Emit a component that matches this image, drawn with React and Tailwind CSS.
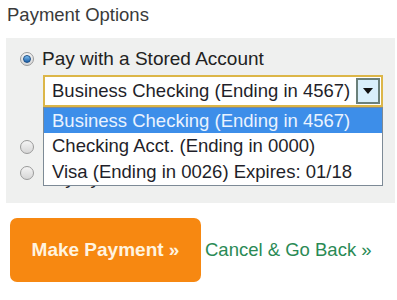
import React from 'react';

function Radio({ checked }) {
    return (
        <span className="flex items-center justify-center w-[14px] h-[14px] rounded-full border border-[#9a9a9a] bg-gradient-to-b from-[#f4f4f4] to-[#d6d6d6] shrink-0">
            {checked && (
                <span className="w-[8px] h-[8px] rounded-full bg-gradient-to-b from-[#7fc1f2] to-[#1a5fa8] border border-[#1d4f86]" />
            )}
        </span>
    );
}

export default function App() {
    const cuentas = [
        'Business Checking (Ending in 4567)',
        'Checking Acct. (Ending in 0000)',
        'Visa (Ending in 0026) Expires: 01/18',
    ];

    return (
        <div className="w-[397px] h-[300px] bg-white overflow-hidden text-[#2b2b2b]" style={{ fontFamily: '"Liberation Sans", Arial, sans-serif' }}>
            <h1 className="pl-[7px] pt-[5px] h-[38px] text-[18.5px] leading-[20px] font-normal text-[#3a3a3a]">Payment Options</h1>

            <div className="relative ml-[6px] w-[389px] h-[165px] bg-[#eff0ef] pt-[11px]">
                <label className="flex items-center gap-[8px] pl-[14px] h-[20px]">
                    <Radio checked />
                    <span className="text-[19px] leading-[20px] text-[#222]">Pay with a Stored Account</span>
                </label>

                {/* select cerrado */}
                <div className="mt-[6px] ml-[37px] w-[340px] h-[32px] flex items-center border-2 border-[#dcb648] bg-white pl-[7px] pr-[1px]">
                    <span className="flex-1 text-[18.5px] leading-[20px] text-[#1f1f2a] whitespace-nowrap">Business Checking (Ending in 4567)</span>
                    <span className="flex items-center justify-center w-[24px] h-[26px] border-2 border-[#6b807a] bg-[#d9effb]">
                        <svg width="10" height="6" viewBox="0 0 10 6"><path d="M0 0 L10 0 L5 6 Z" fill="#111" /></svg>
                    </span>
                </div>

                <div className="h-[27px] ml-[37px] text-[16px] leading-[27px] text-[#444]">Nickname this account</div>

                <label className="flex items-center gap-[8px] pl-[14px] h-[26px]">
                    <Radio />
                    <span className="text-[19px] leading-[20px] text-[#222]">Pay with a New Account</span>
                </label>
                <label className="flex items-center gap-[8px] pl-[14px] h-[26px]">
                    <Radio />
                    <span className="text-[19px] leading-[20px] text-[#222] pt-[10px]">Pay by Check</span>
                </label>

                {/* lista desplegada */}
                <ul className="absolute left-[37px] top-[69px] w-[340px] bg-white border border-[#7d8a96]">
                    {cuentas.map((cuenta, i) => (
                        <li
                            key={i}
                            className={
                                i === 0
                                    ? 'h-[25px] flex items-center pl-[8px] bg-[#3d8ee9] text-[#eaf3ff] text-[18.5px] leading-[20px] whitespace-nowrap'
                                    : 'h-[26px] flex items-center pl-[8px] text-[#1f1f2a] text-[18.5px] leading-[20px] whitespace-nowrap'
                            }
                        >
                            {cuenta}
                        </li>
                    ))}
                </ul>
            </div>

            <div className="flex items-center mt-[15px] ml-[10px]">
                <button className="w-[191px] h-[64px] rounded-[7px] bg-[#f78811] text-[#fff4e0] text-[19px] font-bold">Make Payment »</button>
                <a className="ml-[4px] text-[18.5px] text-[#2a8a55]">Cancel &amp; Go Back »</a>
            </div>
        </div>
    );
}
